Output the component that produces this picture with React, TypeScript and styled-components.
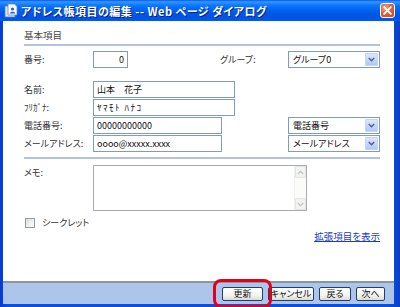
import React from 'react';
import styled, { createGlobalStyle } from 'styled-components';

// アドレス帳項目の編集ダイアログ (XP風)

const GlobalStyles = createGlobalStyle`
  * {
    margin: 0;
    padding: 0;
    box-sizing: border-box;
  }

  html, body {
    width: 400px;
    height: 307px;
    overflow: hidden;
  }

  body {
    font-family: "Noto Sans CJK JP", "Liberation Sans", sans-serif;
    font-feature-settings: "palt";
    color: #222;
  }

  #root {
    height: 100%;
  }
`;

const Window = styled.div`
  position: relative;
  width: 400px;
  height: 307px;
  display: flex;
  flex-direction: column;
  background: linear-gradient(90deg, #0838d0 0%, #0a50e0 2%, #0a50e0 97%, #0840c8 100%);
`;

const TitleBar = styled.div`
  height: 21px;
  display: flex;
  align-items: center;
  gap: 3px;
  padding: 0 5px 0 4px;
  background: linear-gradient(
    180deg,
    #0058ee 0%,
    #3593ff 8%,
    #288eff 14%,
    #127dff 22%,
    #036ffc 34%,
    #0262ee 50%,
    #0057e5 66%,
    #0054e3 80%,
    #0055eb 90%,
    #005bf5 100%
  );
`;

const TitleText = styled.span`
  flex: 1;
  color: #fff;
  font-size: 11px;
  letter-spacing: 0.5px;
  font-weight: bold;
  white-space: pre;
  text-shadow: 1px 1px 0 #0a1e80;
`;

const CloseButton = styled.div`
  width: 15px;
  height: 15px;
  border: 1px solid #fff;
  border-radius: 3px;
  background: radial-gradient(circle at 35% 30%, #f0a184 0%, #e0643e 45%, #c7411b 100%);
  display: flex;
  align-items: center;
  justify-content: center;
`;

const Frame = styled.div`
  flex: 1;
  display: flex;
  flex-direction: column;
  margin: 0 6px 3px 3px;
  background: #fff;
`;

const Content = styled.div`
  flex: 1;
  padding: 7px 14px 0 21px;
  display: flex;
  flex-direction: column;
`;

const SectionTitle = styled.div`
  font-size: 9.5px;
  line-height: 15px;
  color: #444;
  padding-bottom: 1px;
  border-bottom: 2px solid #b5c3da;
`;

const Divider = styled.div`
  height: 2px;
  background: #b5c3da;
  margin-top: 5px;
`;

const FieldGroup = styled.div<{ $top: number }>`
  display: flex;
  flex-direction: column;
  gap: 1px;
  margin-top: ${(p) => p.$top}px;
`;

const FieldRow = styled.div`
  display: grid;
  grid-template-columns: 69px 127px 68px 92px;
  align-items: center;
  height: 17px;
`;

const Label = styled.span`
  font-size: 9px;
  line-height: 17px;
  color: #333;
  white-space: nowrap;
`;

const TextInput = styled.input<{ $w: number; $right?: boolean; $spacing?: number }>`
  width: ${(p) => p.$w}px;
  height: 17px;
  border: 1px solid #7f9db9;
  padding: 0 3px;
  font-family: inherit;
  font-feature-settings: normal;
  font-size: 9px;
  letter-spacing: ${(p) => p.$spacing ?? 0}px;
  color: #111;
  background: #fff;
  text-align: ${(p) => (p.$right ? 'right' : 'left')};
  outline: none;
  grid-column: 2 / span 2;
`;

const SelectBox = styled.div`
  grid-column: 4;
  height: 17px;
  border: 1px solid #7f9db9;
  display: flex;
  align-items: center;
  padding: 1px;
  background: #fff;
`;

const SelectText = styled.span`
  flex: 1;
  font-size: 9px;
  padding-left: 3px;
  color: #111;
  white-space: nowrap;
`;

const SelectArrow = styled.span`
  width: 13px;
  height: 13px;
  border: 1px solid #c3d3fd;
  border-radius: 1px;
  background: linear-gradient(180deg, #dce6fd 0%, #c3d4fb 60%, #b2c7f6 100%);
  display: flex;
  align-items: center;
  justify-content: center;
`;

const MemoRow = styled.div`
  display: grid;
  grid-template-columns: 69px 1fr;
  margin-top: 6px;
`;

const MemoLabel = styled(Label)`
  line-height: 13px;
  padding-top: 1px;
`;

const MemoBox = styled.div`
  width: 214px;
  height: 46px;
  border: 1px solid #a5acb5;
  display: flex;
  justify-content: flex-end;
  background: #fff;
`;

const ScrollTrack = styled.div`
  width: 12px;
  display: flex;
  flex-direction: column;
  justify-content: space-between;
  background: #fbfbfa;
  border-left: 1px solid #f0f0ee;
`;

const ScrollButton = styled.div`
  height: 12px;
  display: flex;
  align-items: center;
  justify-content: center;
  background: #f3f3f1;
  border: 1px solid #e4e4e0;
  border-radius: 1px;
`;

const CheckRow = styled.label`
  display: flex;
  align-items: center;
  gap: 7px;
  margin: 6px 0 0 1px;
  height: 11px;
  font-size: 9px;
  color: #333;
`;

const CheckBox = styled.span`
  width: 10px;
  height: 10px;
  border: 1px solid #8b9aae;
  background: linear-gradient(135deg, #dcdcd6 0%, #f3f3ef 60%, #fff 100%);
`;

const LinkRow = styled.div`
  display: flex;
  justify-content: flex-end;
  margin-top: 2px;
`;

const MoreLink = styled.a`
  font-size: 9.5px;
  line-height: 12px;
  color: #1c3cc4;
  text-decoration: underline;
  cursor: pointer;
`;

const Footer = styled.div`
  height: 23px;
  border-top: 2px solid #8e969c;
  background: #adc5ea;
  display: flex;
  align-items: center;
  justify-content: flex-end;
  gap: 5px;
  padding-right: 9px;
`;

const FooterButton = styled.button<{ $w: number }>`
  width: ${(p) => p.$w}px;
  height: 14px;
  border: 1px solid #1c3f74;
  border-radius: 2px;
  background: linear-gradient(180deg, #ffffff 0%, #f4f4f0 60%, #dcdcd2 100%);
  font-family: inherit;
  font-feature-settings: "palt";
  font-size: 9px;
  line-height: 12px;
  color: #111;
  padding: 0;
`;

const Highlight = styled.div`
  position: absolute;
  left: 213px;
  top: 279px;
  width: 59px;
  height: 29px;
  border: 3.5px solid #e2001a;
  border-radius: 8px;
  pointer-events: none;
`;

const Chevron = ({ color = '#4d6185', up = false }: { color?: string; up?: boolean }) => (
  <svg width="7" height="5" viewBox="0 0 7 5">
    <path
      d={up ? 'M0.8 4 L3.5 1.3 L6.2 4' : 'M0.8 1 L3.5 3.7 L6.2 1'}
      fill="none"
      stroke={color}
      strokeWidth="1.5"
    />
  </svg>
);

const AppIcon = () => (
  <svg width="14" height="15" viewBox="0 0 14 15">
    <rect x="1" y="3" width="10" height="11" fill="#dbe8f8" stroke="#5a7db0" strokeWidth="0.8" />
    <path d="M4 1 H10.5 L13 3.5 V12 H4 Z" fill="#fff" stroke="#6b86aa" strokeWidth="0.8" />
    <circle cx="8.5" cy="6" r="1.6" fill="#2a5fc0" />
    <path d="M5.6 10.5 C6 8.2 11 8.2 11.4 10.5 Z" fill="#2a5fc0" />
  </svg>
);

const CloseIcon = () => (
  <svg width="9" height="9" viewBox="0 0 9 9">
    <path d="M1.2 1.2 L7.8 7.8 M7.8 1.2 L1.2 7.8" stroke="#fff" strokeWidth="1.8" strokeLinecap="square" />
  </svg>
);

const Select = ({ value }: { value: string }) => (
  <SelectBox>
    <SelectText>{value}</SelectText>
    <SelectArrow>
      <Chevron />
    </SelectArrow>
  </SelectBox>
);

const buttons = [
  { label: '更新', w: 41 },
  { label: 'キャンセル', w: 46 },
  { label: '戻る', w: 32 },
  { label: '次へ', w: 29 },
];

export default function App() {
  return (
    <>
      <GlobalStyles />
      <Window>
        <TitleBar>
          <AppIcon />
          <TitleText>アドレス帳項目の編集 -- Web ページ ダイアログ</TitleText>
          <CloseButton>
            <CloseIcon />
          </CloseButton>
        </TitleBar>

        <Frame>
          <Content>
            <SectionTitle>基本項目</SectionTitle>

            <FieldGroup $top={5}>
              <FieldRow>
                <Label>番号:</Label>
                <TextInput $w={35} $right readOnly defaultValue="0" style={{ gridColumn: 2 }} />
                <Label>グループ:</Label>
                <Select value="グループ0" />
              </FieldRow>
            </FieldGroup>

            <FieldGroup $top={13}>
              <FieldRow>
                <Label>名前:</Label>
                <TextInput $w={142} readOnly defaultValue="山本　花子" />
              </FieldRow>
              <FieldRow>
                <Label>ﾌﾘｶﾞﾅ:</Label>
                <TextInput $w={142} $spacing={1.5} readOnly defaultValue="ﾔﾏﾓﾄ ﾊﾅｺ" />
              </FieldRow>
              <FieldRow>
                <Label>電話番号:</Label>
                <TextInput $w={129} readOnly defaultValue="00000000000" />
                <Select value="電話番号" />
              </FieldRow>
              <FieldRow>
                <Label>メールアドレス:</Label>
                <TextInput $w={129} readOnly defaultValue="oooo@xxxxx.xxxx" />
                <Select value="メールアドレス" />
              </FieldRow>
            </FieldGroup>

            <Divider />

            <MemoRow>
              <MemoLabel>メモ:</MemoLabel>
              <MemoBox>
                <ScrollTrack>
                  <ScrollButton>
                    <Chevron up color="#c4c8cc" />
                  </ScrollButton>
                  <ScrollButton>
                    <Chevron color="#c4c8cc" />
                  </ScrollButton>
                </ScrollTrack>
              </MemoBox>
            </MemoRow>

            <CheckRow>
              <CheckBox />
              シークレット
            </CheckRow>

            <LinkRow>
              <MoreLink>拡張項目を表示</MoreLink>
            </LinkRow>
          </Content>

          <Footer>
            {buttons.map((b) => (
              <FooterButton key={b.label} $w={b.w}>
                {b.label}
              </FooterButton>
            ))}
          </Footer>
        </Frame>

        <Highlight />
      </Window>
    </>
  );
}
